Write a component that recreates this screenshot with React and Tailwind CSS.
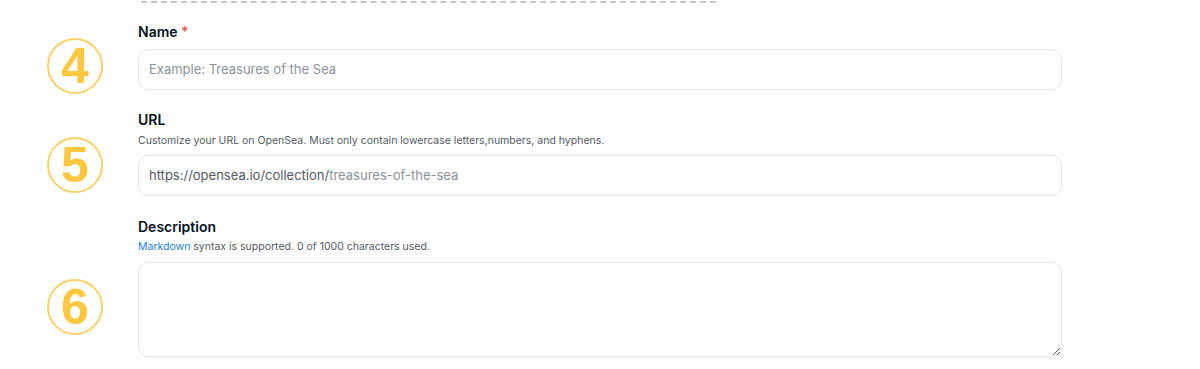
import React from "react";

const font = { fontFamily: "Inter, 'Noto Sans', sans-serif" };

function Circle({ n, mt }) {
  return (
    <div className={`w-[138px] h-0 shrink-0 pl-[47px]`}>
      <div className={`${mt} w-[56px] h-[56px] rounded-full border-2 border-[#fdd068] flex items-center justify-center`}>
        <span className="text-[50px] leading-none font-bold text-[#fdc73f]" style={{ fontFamily: "'Liberation Sans', Arial, sans-serif" }}>{n}</span>
      </div>
    </div>
  );
}

export default function App() {
  return (
    <div className="w-[1200px] h-[369px] bg-white overflow-hidden text-[#04111d]" style={font}>
      <div className="flex">
        <div className="w-[138px] shrink-0" />
        <div className="w-[575px] h-[3px] ml-[3px] border-b-2 border-dashed border-[#c4c4c4]" />
      </div>

      <div className="flex mt-[19px]">
        <Circle n="4" mt="mt-[16px]" />
        <div className="w-[924px]">
          <div className="h-[20px] leading-[20px] text-[14px] font-semibold">
            Name <span className="text-[#eb5757]">*</span>
          </div>
          <div className="mt-[7px] h-[41px] rounded-[10px] border border-[#e5e8eb] flex items-center px-[10px] text-[13px] text-[#8a939b]">
            Example: Treasures of the Sea
          </div>
        </div>
      </div>

      <div className="flex mt-[20px]">
        <Circle n="5" mt="mt-[27px]" />
        <div className="w-[924px]">
          <div className="h-[20px] leading-[20px] text-[14px] font-semibold">URL</div>
          <div className="mt-[3px] h-[16px] leading-[16px] text-[10.5px] text-[#545b63]">
            Customize your URL on OpenSea. Must only contain lowercase letters,numbers, and hyphens.
          </div>
          <div className="mt-[6px] h-[41px] rounded-[10px] border border-[#e5e8eb] flex items-center px-[10px] text-[13px]">
            <span className="text-[#545b63]">https://opensea.io/collection/</span>
            <span className="text-[#8a939b]">treasures-of-the-sea</span>
          </div>
        </div>
      </div>

      <div className="flex mt-[21px]">
        <Circle n="6" mt="mt-[62px]" />
        <div className="w-[924px]">
          <div className="h-[20px] leading-[20px] text-[14px] font-semibold">Description</div>
          <div className="mt-[2px] h-[16px] leading-[16px] text-[10.5px] text-[#545b63]">
            <span className="text-[#2081e2]">Markdown</span> syntax is supported. 0 of 1000 characters used.
          </div>
          <textarea className="block mt-[7px] w-full h-[95px] rounded-[10px] border border-[#e5e8eb] outline-none" />
        </div>
      </div>
    </div>
  );
}
